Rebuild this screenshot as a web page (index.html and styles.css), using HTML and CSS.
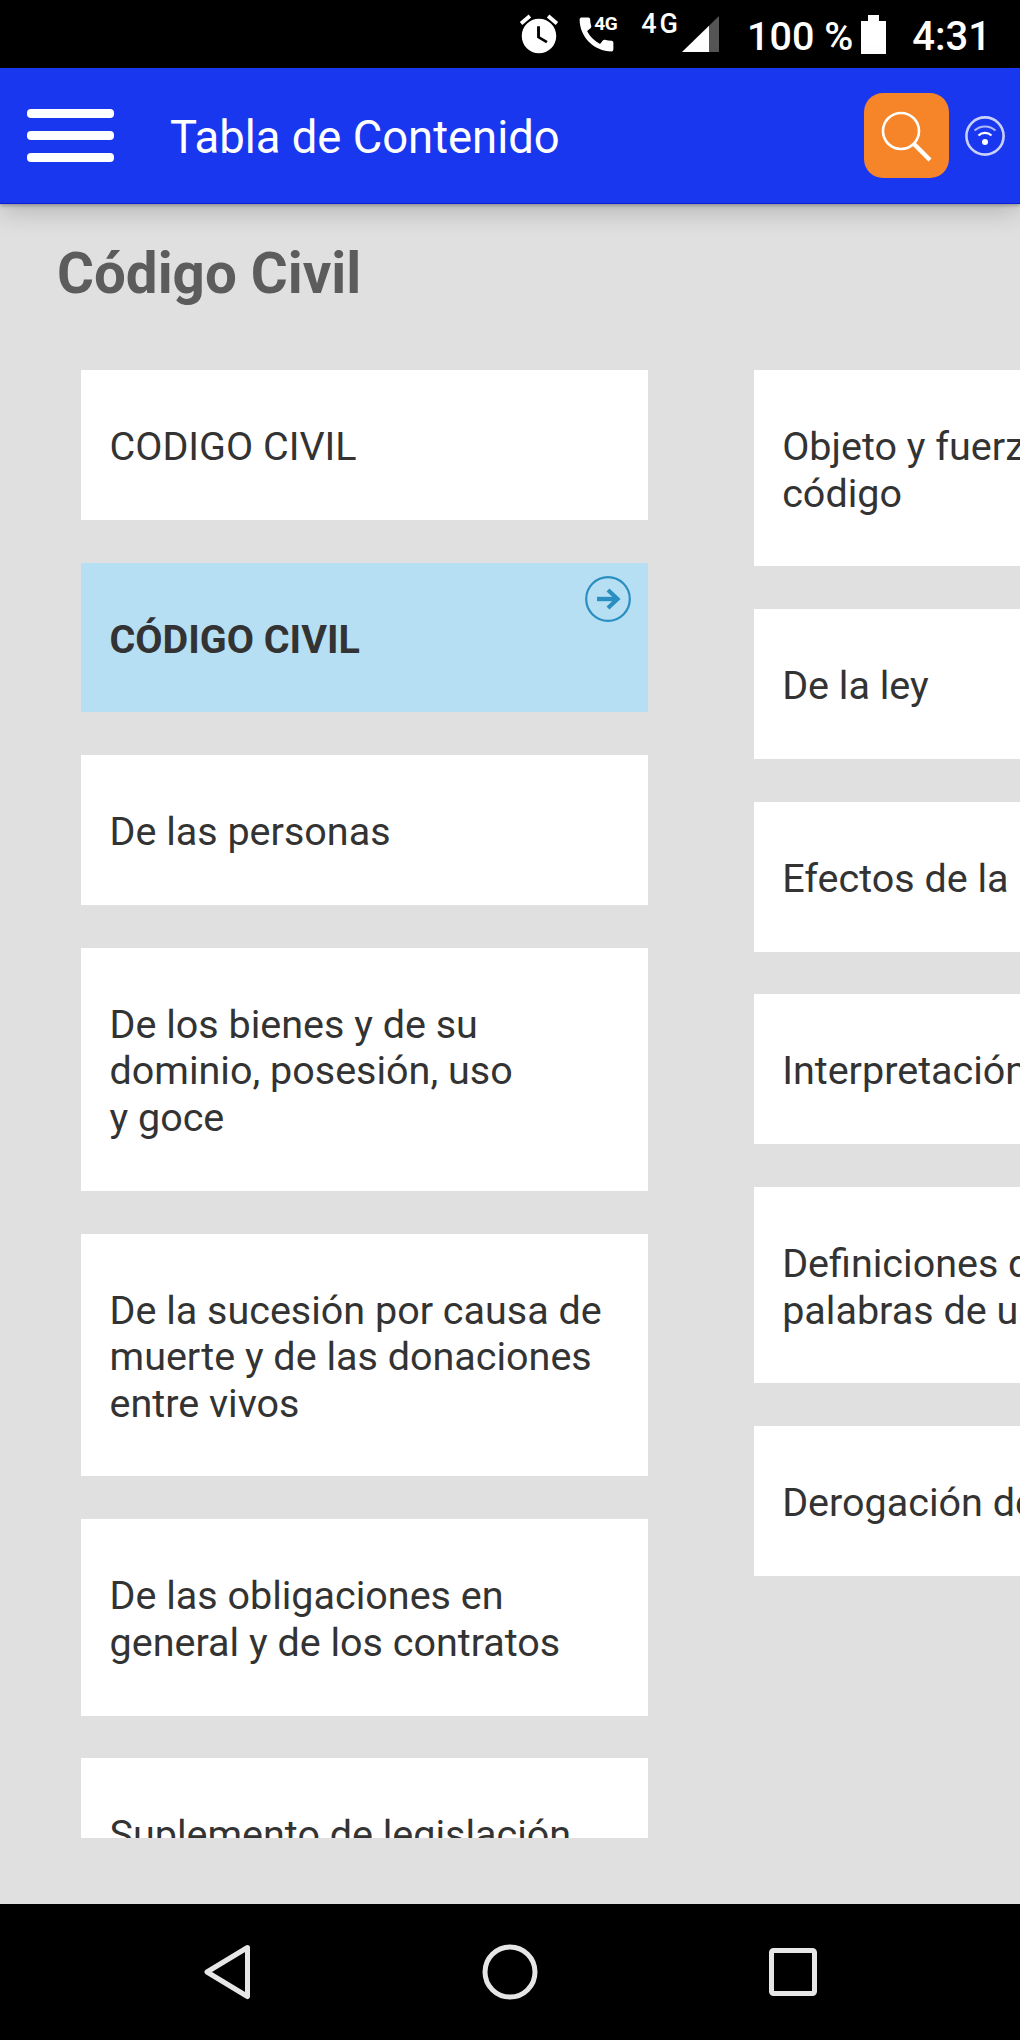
FILE: index.html
```html
<!DOCTYPE html>
<html lang="es">
<head>
<meta charset="utf-8">
<title>Tabla de Contenido</title>
<link rel="stylesheet" href="styles.css">
</head>
<body>
<div class="phone">
  <div class="status">
    <svg class="ic-alarm" viewBox="0 0 24 24"><path fill="#fff" d="M22 5.72l-4.6-3.86-1.29 1.53 4.6 3.86L22 5.72zM7.88 3.39L6.6 1.86 2 5.71l1.29 1.53 4.59-3.85zM12 4c-4.97 0-9 4.03-9 9s4.02 9 9 9c4.97 0 9-4.03 9-9s-4.03-9-9-9z"/><path fill="#000" d="M12.5 8H11v6l4.75 2.85.75-1.23-4-2.37V8z"/></svg>
    <div class="call">
      <svg class="ic-call" viewBox="0 0 24 24"><path fill="#fff" d="M20.01 15.38c-1.23 0-2.42-.2-3.53-.56-.35-.12-.74-.03-1.01.24l-1.57 1.97c-2.83-1.35-5.48-3.9-6.89-6.83l1.95-1.66c.27-.28.35-.67.24-1.02-.37-1.11-.56-2.3-.56-3.53 0-.54-.45-.99-.99-.99H4.19C3.65 3 3 3.24 3 3.99 3 13.28 10.73 21 20.01 21c.71 0 .99-.63.99-1.18v-3.45c0-.54-.45-.99-.99-.99z"/></svg>
      <span class="mini">4G</span>
    </div>
    <span class="net">4G</span>
    <svg class="ic-signal" viewBox="0 0 37 36"><polygon fill="#fff" points="0,36 27,9.7 27,36"/><polygon fill="#555" points="27,9.7 37,0 37,36 27,36"/></svg>
    <span class="pct">100 %</span>
    <svg class="ic-batt" viewBox="0 0 25 39"><path fill="#fff" d="M7 0h11v6h7v33H0V6h7z"/></svg>
    <span class="time">4:31</span>
  </div>

  <header class="bar">
    <div class="burger"><span></span><span></span><span></span></div>
    <h1 class="bar-title">Tabla de Contenido</h1>
    <div class="search">
      <svg viewBox="0 0 85 85" class="ic-search"><circle cx="37" cy="38" r="18" fill="none" stroke="#fff" stroke-width="2.6"/><path d="M50 51l16 16" stroke="#fff" stroke-width="4.4" fill="none"/></svg>
    </div>
    <svg class="ic-wifi" viewBox="0 0 42 42"><circle cx="21" cy="21" r="18.6" fill="none" stroke="#c9d1fb" stroke-width="2.6"/><circle cx="21" cy="27" r="3" fill="#fff"/><path d="M14.5 20.5a9.5 9.5 0 0 1 13 0" fill="none" stroke="#fff" stroke-width="2.2"/><path d="M10.5 15.5a15.5 15.5 0 0 1 21 0" fill="none" stroke="#aeb9f8" stroke-width="2"/></svg>
  </header>

  <main class="content">
    <h2 class="heading">Código Civil</h2>
    <div class="columns">
      <div class="col">
        <div class="card">CODIGO CIVIL</div>
        <div class="card card-active">CÓDIGO CIVIL
          <svg class="ic-go" viewBox="0 0 46 46"><circle cx="23" cy="23" r="21.8" fill="none" stroke="#2a8fc0" stroke-width="2.2"/><path d="M12 23h20" stroke="#2a8fc0" stroke-width="4.4" fill="none"/><path d="M23 14l9.5 9-9.5 9" stroke="#2a8fc0" stroke-width="4.2" fill="none"/></svg>
        </div>
        <div class="card">De las personas</div>
        <div class="card">De los bienes y de su dominio, posesión, uso y&nbsp;goce</div>
        <div class="card">De la sucesión por causa de muerte y de las donaciones entre vivos</div>
        <div class="card">De las obligaciones en general y de los contratos</div>
        <div class="card">Suplemento de legislación</div>
      </div>
      <div class="col">
        <div class="card">Objeto y fuerza del presente código</div>
        <div class="card">De la ley</div>
        <div class="card">Efectos de la ley</div>
        <div class="card">Interpretación de la ley</div>
        <div class="card">Definiciones de varias palabras de uso frecuente</div>
        <div class="card">Derogación de las leyes</div>
      </div>
    </div>
  </main>

  <nav class="nav">
    <svg class="ic-back" viewBox="0 0 46 56"><path d="M43.5 3.5L3 28l40.500 24.500z" fill="none" stroke="#e6e6e6" stroke-width="5" stroke-linejoin="round"/></svg>
    <svg class="ic-home" viewBox="0 0 56 56"><circle cx="28" cy="28" r="25" fill="none" stroke="#e6e6e6" stroke-width="5"/></svg>
    <svg class="ic-recent" viewBox="0 0 48 48"><rect x="2.500" y="2.500" width="43" height="43" rx="2" fill="none" stroke="#e6e6e6" stroke-width="5"/></svg>
  </nav>
</div>
</body>
</html>
```
FILE: styles.css
```css
* { box-sizing: border-box; }
html, body { margin: 0; padding: 0; overflow: hidden; }
body { font-family: Roboto, "Liberation Sans", sans-serif; background: #000; }
.phone { width: 1020px; height: 2040px; display: flex; flex-direction: column; overflow: hidden; }

.status { height: 68px; flex: none; background: #000; color: #fff; display: flex; align-items: center; justify-content: flex-end; padding-right: 29px; }
.ic-alarm { width: 46px; height: 46px; }
.call { position: relative; width: 45px; height: 45px; margin-left: 12px; }
.ic-call { width: 45px; height: 45px; display: block; }
.mini { position: absolute; left: 20px; top: 2px; font-size: 19px; line-height: 20px; font-weight: 700; letter-spacing: -.5px; }
.net { margin-left: 22px; font-size: 27px; font-weight: 500; letter-spacing: 3px; position: relative; top: -10px; line-height: 30px; }
.ic-signal { width: 37px; height: 36px; margin-left: 1px; }
.pct { margin: 5px 0 0 28px; font-size: 39.5px; font-weight: 500; line-height: 44px; }
.ic-batt { width: 25px; height: 39px; margin-left: 8px; }
.time { margin: 5px 0 0 26px; font-size: 40px; font-weight: 500; line-height: 44px; }

.bar { height: 136px; flex: none; background: #1a37f0; border-bottom: 1px solid #0a1fd8; display: flex; align-items: center; position: relative; z-index: 2; box-shadow: 0 2px 3px rgba(0,0,0,.22), 0 6px 26px rgba(0,0,0,.22); }
.burger { width: 87px; margin-left: 27px; display: flex; flex-direction: column; gap: 12.5px; }
.burger span { height: 9.5px; background: #fff; border-radius: 4px; }
.bar-title { margin: 3px 0 0 56px; font-size: 45.4px; font-weight: 400; color: #fff; flex: 1; }
.search { width: 85px; height: 85px; background: #f68428; border-radius: 19px; margin-right: 15px; }
.ic-search { width: 85px; height: 85px; display: block; }
.ic-wifi { width: 42px; height: 42px; margin-right: 14px; }

.content { flex: 1; background: #e0e0e0; padding: 0; display: flex; flex-direction: column; min-height: 0; }
.heading { margin: 38px 0 0 57px; font-size: 56.5px; line-height: 64px; font-weight: 700; color: #5c5c5c; height: 128px; }
.columns { display: flex; gap: 105.7px; padding-left: 81px; height: 1468px; overflow: hidden; flex: none; }
.col { flex: none; width: 567px; display: flex; flex-direction: column; gap: 42.8px; }
.card { background: #fff; color: #333; font-size: 39.5px; line-height: 46.6px; padding: 54px 29px 49.2px 28.5px; position: relative; flex: none; }
.card-active { background: #b6dff4; font-weight: 700; }
.ic-go { position: absolute; right: 17px; top: 13px; width: 46px; height: 46px; }

.nav { height: 136px; flex: none; background: #000; display: grid; grid-template-columns: repeat(3, 283px); justify-content: center; align-items: center; justify-items: center; }
.ic-back { width: 46px; height: 56px; }
.ic-home { width: 56px; height: 56px; }
.ic-recent { width: 48px; height: 48px; }
```
